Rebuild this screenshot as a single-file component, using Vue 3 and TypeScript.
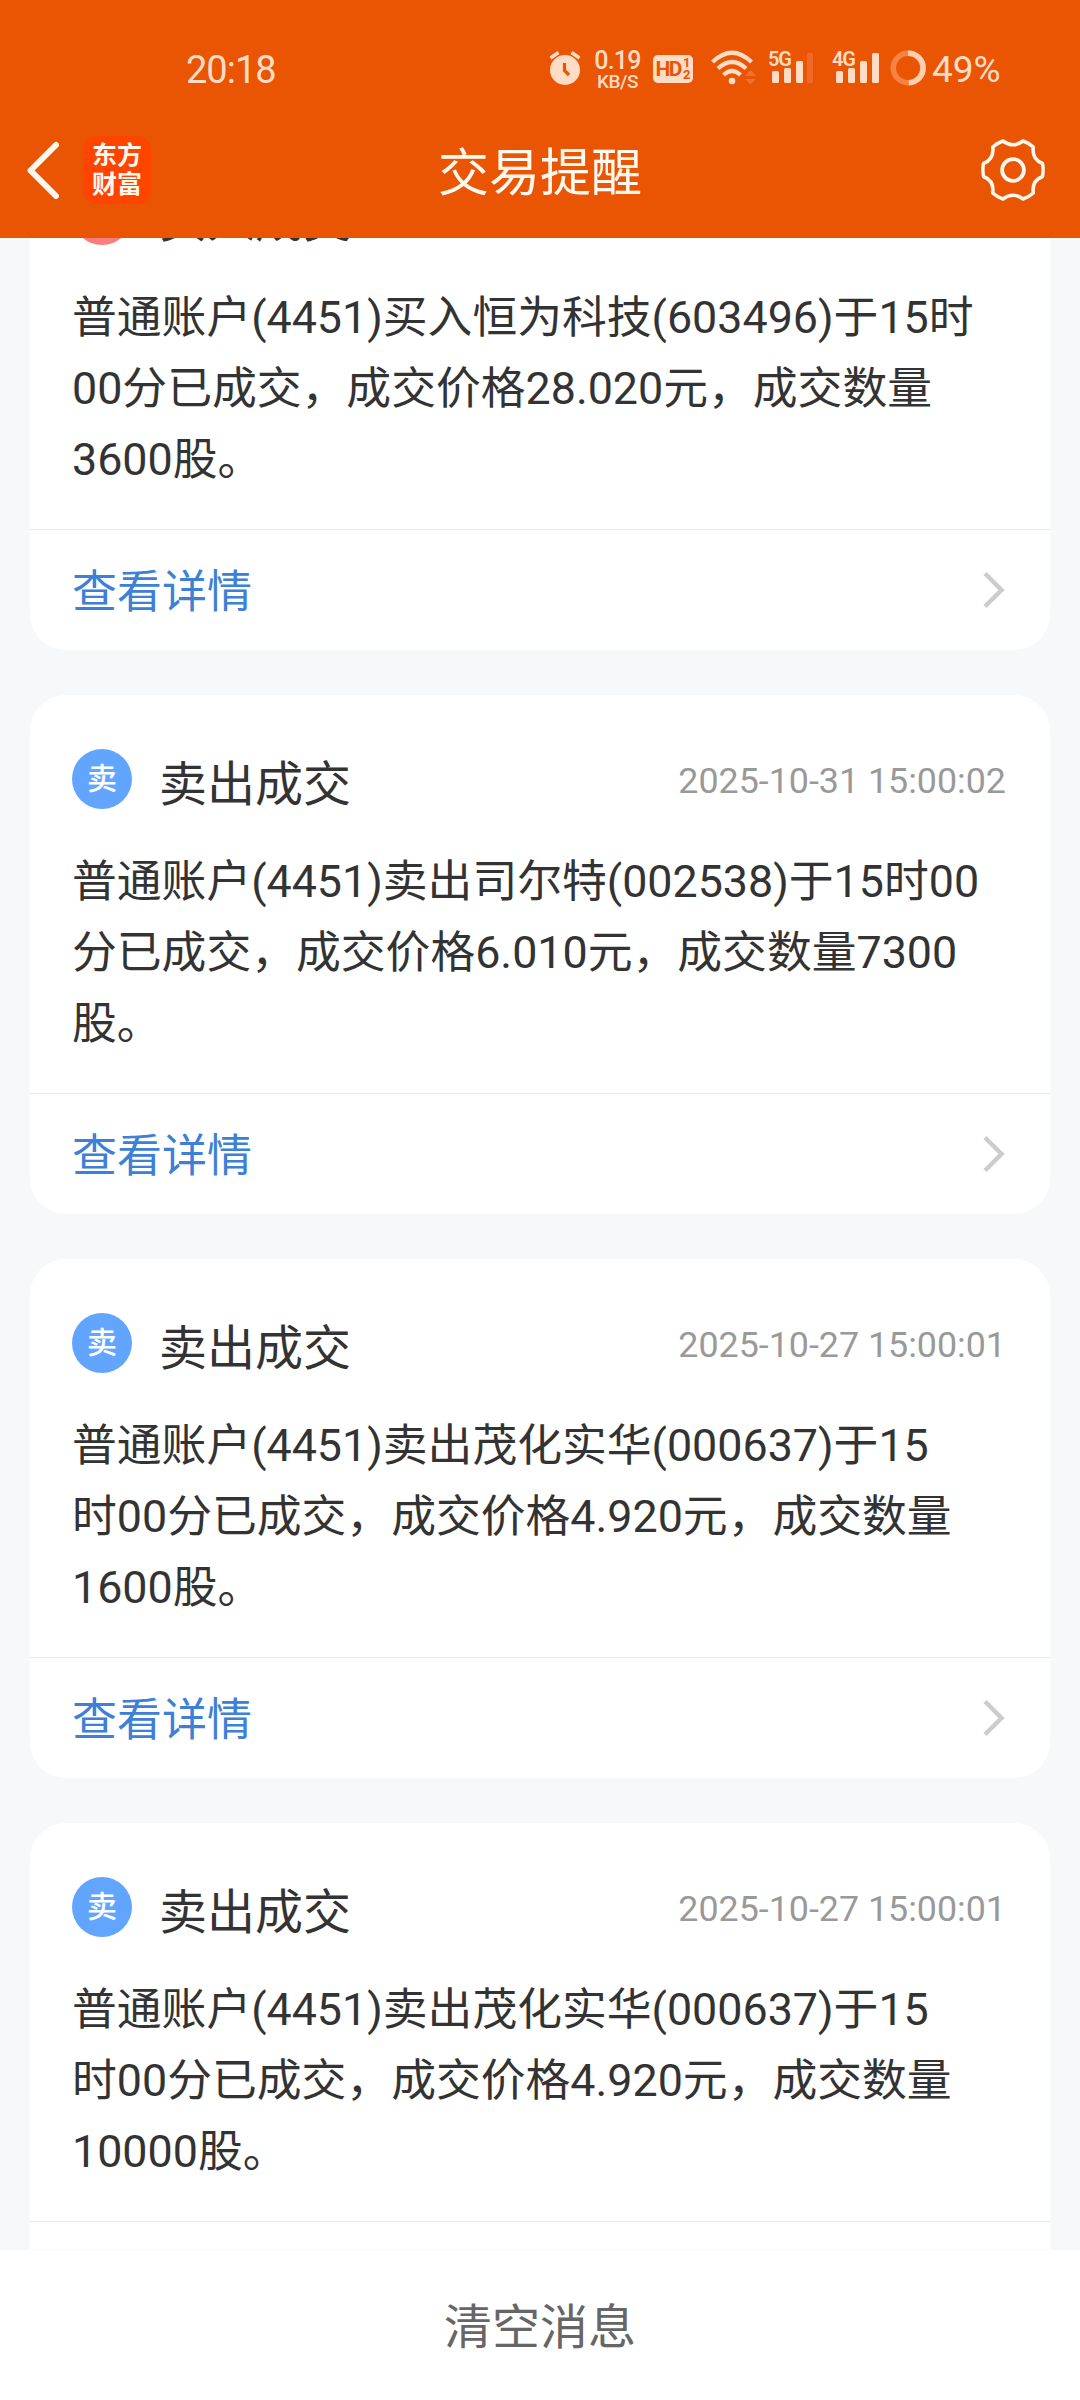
<script setup lang="ts">
interface Notice {
  kind: 'buy' | 'sell'
  title: string
  time: string
  lines: string[]
}

const notices: Notice[] = [
  {
    kind: 'buy',
    title: '买入成交',
    time: '2025-10-31 15:00:02',
    lines: ['普通账户(4451)买入恒为科技(603496)于15时', '00分已成交，成交价格28.020元，成交数量', '3600股。'],
  },
  {
    kind: 'sell',
    title: '卖出成交',
    time: '2025-10-31 15:00:02',
    lines: ['普通账户(4451)卖出司尔特(002538)于15时00', '分已成交，成交价格6.010元，成交数量7300', '股。'],
  },
  {
    kind: 'sell',
    title: '卖出成交',
    time: '2025-10-27 15:00:01',
    lines: ['普通账户(4451)卖出茂化实华(000637)于15', '时00分已成交，成交价格4.920元，成交数量', '1600股。'],
  },
  {
    kind: 'sell',
    title: '卖出成交',
    time: '2025-10-27 15:00:01',
    lines: ['普通账户(4451)卖出茂化实华(000637)于15', '时00分已成交，成交价格4.920元，成交数量', '10000股。'],
  },
]
</script>

<template>
  <div class="screen">
    <header class="top">
      <div class="status">
        <span class="clock">20:18</span>
        <div class="indicators">
          <svg class="alarm" width="32" height="36" viewBox="0 0 32 36">
            <circle cx="16" cy="20" r="15" fill="#ffdcc6" />
            <path d="M1.500 8 L9.500 2.500 M30.500 8 L22.500 2.500" stroke="#ffdcc6" stroke-width="3.500" fill="none" />
            <path d="M15.500 13 V20.500 L20 25" stroke="#ea5504" stroke-width="3.200" fill="none" />
          </svg>
          <div class="speed"><span class="rate">0.19</span><span class="unit">KB/S</span></div>
          <div class="hd"><span>HD</span><span class="sims"><i>1</i><i>2</i></span></div>
          <svg class="wifi" width="46" height="36" viewBox="0 0 46 36">
            <g fill="none" stroke="#ffdcc6" stroke-width="4.200">
              <path d="M1.500 12 Q21 -6.500 40.500 12" />
              <path d="M7 18.500 Q21 5.500 35 18.500" />
              <path d="M12.500 25 Q21 17 29.500 25" />
            </g>
            <circle cx="21" cy="31" r="3.300" fill="#ffdcc6" />
            <path d="M34 26 L39.500 20 L45 26 Z M34 29 L39.500 34.500 L45 29 Z" fill="#f0702f" />
          </svg>
          <div class="signal g5">
            <span class="net">5G</span>
            <svg width="44" height="30" viewBox="0 0 44 30">
              <g fill="#ffdcc6">
                <rect x="3" y="18" width="7" height="12" rx="1.500" />
                <rect x="15" y="15" width="7" height="15" rx="1.500" />
                <rect x="27" y="8" width="7" height="22" rx="1.500" />
              </g>
              <rect x="38" y="0" width="6" height="30" rx="1.500" fill="#ef6a2a" />
            </svg>
          </div>
          <div class="signal g4">
            <span class="net">4G</span>
            <svg width="46" height="30" viewBox="0 0 46 30">
              <g fill="#ffdcc6">
                <rect x="3" y="18" width="7" height="12" rx="1.500" />
                <rect x="15" y="15" width="7" height="15" rx="1.500" />
                <rect x="27" y="8" width="7" height="22" rx="1.500" />
                <rect x="39" y="0" width="7" height="30" rx="1.500" />
              </g>
            </svg>
          </div>
          <svg class="battery" width="36" height="36" viewBox="0 0 36 36">
            <circle cx="18" cy="18" r="14.700" fill="none" stroke="#f58444" stroke-width="5.600" />
            <path d="M18 3.300 A14.700 14.700 0 0 1 18.900 32.700" fill="none" stroke="#ffcfb2" stroke-width="5.600" />
          </svg>
          <span class="percent">49%</span>
        </div>
      </div>
      <div class="nav">
        <div class="left">
          <svg width="34" height="58" viewBox="0 0 34 58">
            <path d="M30 4 L4.500 29.500 L30 55" fill="none" stroke="#fff8ee" stroke-width="6" stroke-linecap="round" stroke-linejoin="round" />
          </svg>
          <div class="logo"><span>东方</span><span>财富</span></div>
        </div>
        <h1>交易提醒</h1>
        <svg class="gear" width="64" height="64" viewBox="-32 -32 64 64">
          <path
            d="M-10 -29 Q0 -21.500 10 -29 Q15.800 -27 20.300 -23 Q18.600 -10.700 29.500 -6.500 Q30.700 0 29.500 6.500 Q18.600 10.700 20.300 23 Q15.800 27 10 29 Q0 21.500 -10 29 Q-15.800 27 -20.300 23 Q-18.600 10.700 -29.500 6.500 Q-30.700 0 -29.500 -6.500 Q-18.600 -10.700 -20.300 -23 Q-15.800 -27 -10 -29 Z"
            fill="none" stroke="#fff8ee" stroke-width="3.500" stroke-linejoin="round"
          />
          <circle r="10.900" fill="none" stroke="#fff8ee" stroke-width="3.800" />
        </svg>
      </div>
    </header>

    <main class="feed">
      <div class="list">
        <article v-for="(n, i) in notices" :key="i" class="card">
          <div class="head">
            <span class="badge" :class="n.kind">{{ n.kind === 'buy' ? '买' : '卖' }}</span>
            <h2>{{ n.title }}</h2>
            <time>{{ n.time }}</time>
          </div>
          <div class="body">
            <p v-for="line in n.lines" :key="line">{{ line }}</p>
          </div>
          <div class="more">
            <span>查看详情</span>
            <svg width="24" height="38" viewBox="0 0 24 38">
              <path d="M3 2.500 L19.500 19 L3 35.500" fill="none" stroke="#cccccc" stroke-width="4.500" />
            </svg>
          </div>
        </article>
      </div>
    </main>

    <footer class="clear">清空消息</footer>
  </div>
</template>

<style>
body {
  margin: 0;
}
</style>

<style scoped>
.screen {
  width: 1080px;
  height: 2400px;
  display: flex;
  flex-direction: column;
  overflow: hidden;
  background: #f7f8fa;
  color: #333;
  font-family: Roboto, "Noto Sans CJK SC", sans-serif;
}
h1, h2, p {
  margin: 0;
  font-weight: 400;
}
svg {
  display: block;
  flex: none;
}
.top {
  flex: none;
  height: 238px;
  background: #ea5504;
}
.status {
  height: 104px;
  display: flex;
  justify-content: space-between;
  box-sizing: border-box;
  padding: 0 78px 0 186px;
  color: #ffdcc6;
}
.clock {
  font-size: 38px;
  line-height: 44px;
  margin-top: 48px;
  letter-spacing: -1px;
}
.indicators {
  display: flex;
  align-items: flex-start;
  padding-top: 50px;
}
.alarm {
  margin: 0 14px 0 0;
}
.speed {
  width: 45px;
  display: flex;
  flex-direction: column;
  align-items: center;
  margin-right: 13px;
  font-weight: 500;
}
.rate {
  font-size: 25px;
  line-height: 22px;
  letter-spacing: -0.8px;
}
.unit {
  font-size: 19px;
  line-height: 19px;
  letter-spacing: -0.5px;
}
.hd {
  display: flex;
  justify-content: center;
  gap: 2px;
  width: 40px;
  height: 28px;
  margin: 5px 18px 0 0;
  border-radius: 5px;
  background: #ffdcc6;
  color: #ea5504;
  font-size: 21px;
  font-weight: 700;
  line-height: 29px;
  letter-spacing: -1.5px;
}
.sims {
  display: flex;
  flex-direction: column;
  padding-top: 2px;
}
.sims i {
  font-style: normal;
  font-size: 13px;
  line-height: 12px;
  letter-spacing: 0;
}
.wifi {
  margin: 0 12px 0 0;
}
.signal {
  position: relative;
  padding-top: 3px;
}
.signal.g5 {
  margin-right: 20px;
}
.signal.g4 {
  margin-right: 11px;
}
.net {
  position: absolute;
  left: -1px;
  top: 0;
  font-size: 20px;
  font-weight: 600;
  line-height: 18px;
  letter-spacing: -1.2px;
}
.percent {
  width: 70px;
  margin-left: 6px;
  font-size: 37px;
  line-height: 40px;
}
.nav {
  display: flex;
  align-items: center;
  justify-content: space-between;
  height: 134px;
  box-sizing: border-box;
  padding: 0 35px 3px 26px;
  color: #fff8ee;
}
.left {
  width: 355px;
  display: flex;
  align-items: center;
  gap: 23px;
}
.logo {
  width: 68px;
  height: 68px;
  display: flex;
  flex-direction: column;
  align-items: center;
  justify-content: center;
  border-radius: 14px;
  background: #ff4400;
  font-size: 25px;
  font-weight: 700;
  line-height: 29px;
}
.nav h1 {
  flex: 1;
  font-size: 51px;
  line-height: 70px;
  padding: 9px 0 0 57px;
}
.feed {
  flex: none;
  height: 2011px;
  overflow: hidden;
}
.list {
  display: flex;
  flex-direction: column;
  gap: 45px;
  margin: -107px 30px 0;
}
.card {
  flex: none;
  height: 519px;
  border-radius: 36px;
  background: #fff;
}
.head {
  display: flex;
  align-items: flex-start;
  height: 151px;
  box-sizing: border-box;
  padding: 54px 44px 0 42px;
}
.badge {
  width: 60px;
  height: 60px;
  border-radius: 50%;
  color: #fff;
  font-size: 30px;
  font-weight: 500;
  line-height: 60px;
  text-align: center;
}
.badge.sell {
  background: #62a5ff;
}
.badge.buy {
  background: #fa7d7d;
}
.head h2 {
  flex: 1;
  margin-left: 27px;
  font-size: 48px;
  line-height: 71px;
}
.head time {
  font-size: 35.800px;
  line-height: 64px;
  color: #999;
}
.body {
  height: 247px;
  padding-left: 42px;
}
.body p {
  font-size: 44.800px;
  line-height: 71px;
  white-space: nowrap;
}
.more {
  display: flex;
  align-items: center;
  justify-content: space-between;
  height: 121px;
  box-sizing: border-box;
  border-top: 1px solid #ebebeb;
  padding: 0 44px 0 42px;
  color: #3d80d6;
  font-size: 45px;
  line-height: 68px;
}
.more span {
  padding-top: 5px;
}
.clear {
  flex: none;
  height: 150px;
  margin-top: 1px;
  box-sizing: border-box;
  padding-top: 3px;
  background: #fff;
  color: #666;
  font-size: 48px;
  line-height: 150px;
  text-align: center;
}
</style>
